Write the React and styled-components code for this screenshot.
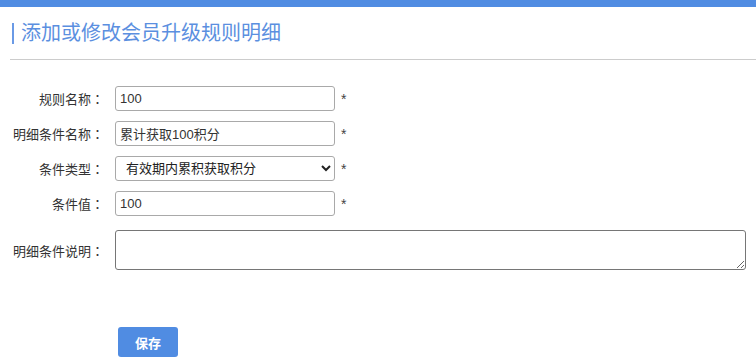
import React from "react";
import styled, { createGlobalStyle } from "styled-components";

const GlobalStyle = createGlobalStyle`
  html, body {
    margin: 0;
    padding: 0;
    background: #fff;
    font-family: "Liberation Sans", "Noto Sans CJK SC", sans-serif;
    font-size: 13px;
    color: #333;
  }
`;

const Page = styled.div`
  width: 756px;
  height: 364px;
  overflow: hidden;
`;

const TopBar = styled.div`
  height: 7px;
  background-color: #508ce2;
`;

const TitleWrap = styled.div`
  padding: 16px 0 0 10px;
`;

const Title = styled.h2`
  margin: 0 0 0 2px;
  padding-left: 7px;
  border-left: 2px solid #6a9ae6;
  height: 21px;
  line-height: 21px;
  font-size: 20px;
  font-weight: normal;
  color: #5b8fe0;
`;

const Divider = styled.div`
  margin-top: 15px;
  border-top: 1px solid #cccccc;
`;

const Form = styled.form`
  margin-top: 21px;
  display: flex;
  flex-direction: column;
`;

const Row = styled.div`
  display: grid;
  grid-template-columns: 104px auto auto 1fr;
  align-items: center;
  min-height: 35px;
  padding: ${(p) => p.pad || "0"};
`;

const Label = styled.label`
  text-align: right;
  font-size: 13px;
  color: #333;
  font-family: "Noto Sans CJK SC", sans-serif;
`;

// centred full-width colon, as in the reference
const Colon = styled.span`
  font-family: "Noto Sans CJK TC", sans-serif;
`;

const Field = styled.div`
  padding-left: 11px;
`;

const TextInput = styled.input`
  box-sizing: border-box;
  width: 220px;
  height: 25px;
  padding: 0 4px;
  border: 1px solid #a9a9a9;
  border-radius: 3px;
  font-size: 13px;
  font-family: "Liberation Sans", "Noto Sans CJK SC", sans-serif;
  color: #333;
  outline: none;
`;

const Select = styled.select`
  box-sizing: border-box;
  width: 220px;
  height: 25px;
  padding: 0 6px;
  border: 1px solid #a9a9a9;
  border-radius: 3px;
  background: #fff;
  font-size: 13px;
  font-family: "Liberation Sans", "Noto Sans CJK SC", sans-serif;
  color: #222;
`;

const TextArea = styled.textarea`
  box-sizing: border-box;
  display: block;
  width: 631px;
  height: 40px;
  border: 1px solid #767676;
  border-radius: 3px;
  font-family: "Liberation Sans", "Noto Sans CJK SC", sans-serif;
  font-size: 13px;
`;

const Star = styled.span`
  padding-left: 6px;
  color: #444;
  font-size: 14px;
`;

const Actions = styled.div`
  padding: 48px 0 0 118px;
`;

const SaveButton = styled.button`
  width: 60px;
  height: 30px;
  border: none;
  border-radius: 3px;
  background-color: #508ce2;
  color: #fff;
  font-size: 13px;
  font-weight: bold;
  font-family: "Noto Sans CJK SC", sans-serif;
  cursor: pointer;
`;

const FieldLabel = ({ children }) => (
  <Label>
    {children}
    <Colon>：</Colon>
  </Label>
);

const App = () => {
  return (
    <Page>
      <GlobalStyle />
      <TopBar />
      <TitleWrap>
        <Title>添加或修改会员升级规则明细</Title>
        <Divider />
      </TitleWrap>
      <Form onSubmit={(e) => e.preventDefault()}>
        <Row>
          <FieldLabel>规则名称</FieldLabel>
          <Field>
            <TextInput defaultValue="100" />
          </Field>
          <Star>*</Star>
        </Row>
        <Row>
          <FieldLabel>明细条件名称</FieldLabel>
          <Field>
            <TextInput defaultValue="累计获取100积分" />
          </Field>
          <Star>*</Star>
        </Row>
        <Row>
          <FieldLabel>条件类型</FieldLabel>
          <Field>
            <Select defaultValue="1">
              <option value="1">有效期内累积获取积分</option>
            </Select>
          </Field>
          <Star>*</Star>
        </Row>
        <Row>
          <FieldLabel>条件值</FieldLabel>
          <Field>
            <TextInput defaultValue="100" />
          </Field>
          <Star>*</Star>
        </Row>
        <Row pad="9px 0">
          <FieldLabel>明细条件说明</FieldLabel>
          <Field>
            <TextArea />
          </Field>
        </Row>
        <Actions>
          <SaveButton type="submit">保存</SaveButton>
        </Actions>
      </Form>
    </Page>
  );
};

export default App;
